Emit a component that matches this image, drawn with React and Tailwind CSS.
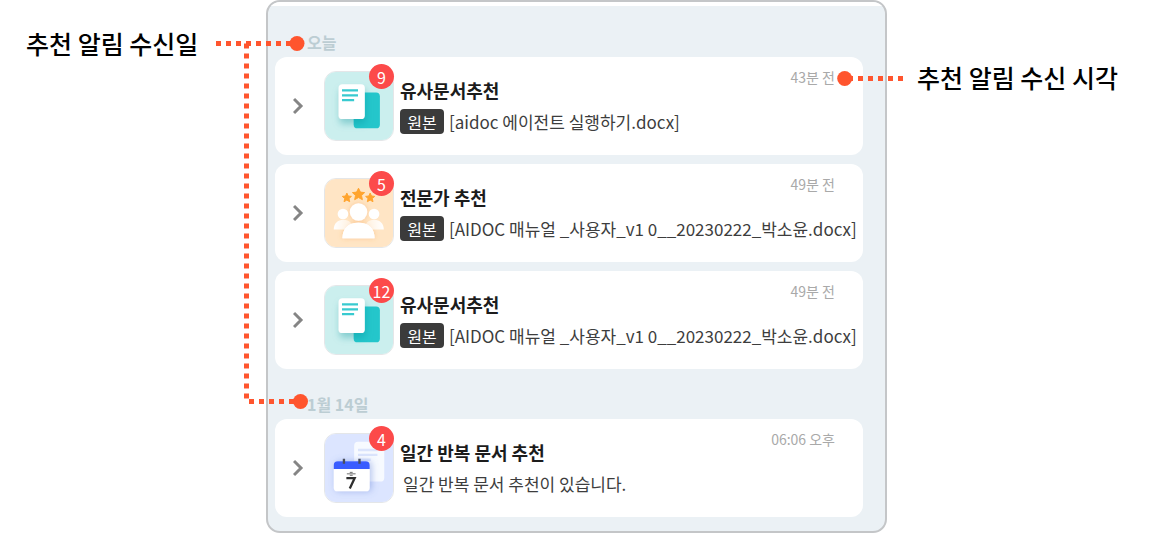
import React from 'react';

const GROUPS = [
    {
        id: 'today',
        label: '오늘',
        items: [
            { id: 1, icon: 'docs', count: 9, title: '유사문서추천', time: '43분 전', source: true, text: '[aidoc 에이전트 실행하기.docx]' },
            { id: 2, icon: 'experts', count: 5, title: '전문가 추천', time: '49분 전', source: true, text: '[AIDOC 매뉴얼 _사용자_v1 0__20230222_박소윤.docx]' },
            { id: 3, icon: 'docs', count: 12, title: '유사문서추천', time: '49분 전', source: true, text: '[AIDOC 매뉴얼 _사용자_v1 0__20230222_박소윤.docx]' },
        ],
    },
    {
        id: 'jan14',
        label: '1월 14일',
        items: [
            { id: 4, icon: 'daily', count: 4, title: '일간 반복 문서 추천', time: '06:06 오후', source: false, text: '일간 반복 문서 추천이 있습니다.' },
        ],
    },
];

const DocsIcon = () => (
    <svg viewBox="0 0 70 70" className="block size-full" aria-hidden="true">
        <defs>
            <filter id="docShadow" x="-50%" y="-50%" width="200%" height="200%">
                <feDropShadow dx="1" dy="5" stdDeviation="4" floodColor="#0c8f96" floodOpacity="0.35" />
            </filter>
        </defs>
        <rect width="70" height="70" fill="#cbefee" />
        <rect x="29.5" y="21" width="27" height="37" rx="4" fill="#24c6cb" />
        <rect x="14" y="12.5" width="27" height="36" rx="4" fill="#fff" filter="url(#docShadow)" />
        <path d="M17.500 19h16.500M17.500 24h16.500M17.500 29h12.500" stroke="#38cad0" strokeWidth="2.4" />
    </svg>
);

const ExpertsIcon = () => (
    <svg viewBox="0 0 70 70" className="block size-full" aria-hidden="true">
        <defs>
            <filter id="peopleShadow" x="-50%" y="-50%" width="200%" height="200%">
                <feDropShadow dx="0" dy="0" stdDeviation="3" floodColor="#f59a3c" floodOpacity="0.4" />
            </filter>
            <linearGradient id="sideFade" x1="0" x2="1">
                <stop offset="0" stopColor="#fff" />
                <stop offset="1" stopColor="#fff" stopOpacity="0.4" />
            </linearGradient>
            <linearGradient id="sideFadeRight" x1="1" x2="0">
                <stop offset="0" stopColor="#fff" />
                <stop offset="1" stopColor="#fff" stopOpacity="0.4" />
            </linearGradient>
        </defs>
        <rect width="70" height="70" fill="#ffe5c5" />
        <g fill="#fff" filter="url(#peopleShadow)">
            <circle cx="34.5" cy="34" r="9" />
            <path d="M18 61c0-10 6-16 16.500-16s16.500 6 16.500 16z" />
        </g>
        <circle cx="18.5" cy="36" r="5.5" fill="#fff" />
        <circle cx="50.5" cy="36" r="5.5" fill="#fff" />
        <path d="M9 52c0-6 4-10 10-10s10 4 10 10z" fill="url(#sideFade)" />
        <path d="M60.500 52c0-6-4-10-10-10s-10 4-10 10z" fill="url(#sideFadeRight)" />
        <path d="M18 61c0-10 6-16 16.500-16s16.500 6 16.500 16z" fill="#fff" />
        <g fill="#ffa42e" stroke="#ffa42e" strokeWidth="1" strokeLinejoin="round">
            <path d="M34.500 9.500l2 4 4.300.500-3.200 3 .900 4.300-4-2.200-4 2.200.900-4.300-3.200-3 4.300-.500z" />
            <path d="M22.500 14.500l1.400 3 3.300.400-2.500 2.200.700 3.300-2.900-1.700-2.900 1.700.700-3.300-2.500-2.200 3.300-.400z" />
            <path d="M46.500 14.500l1.400 3 3.300.400-2.500 2.200.700 3.300-2.900-1.700-2.900 1.700.700-3.300-2.500-2.200 3.300-.400z" />
        </g>
    </svg>
);

const DailyIcon = () => (
    <svg viewBox="0 0 70 70" className="block size-full" aria-hidden="true">
        <defs>
            <filter id="calShadow" x="-50%" y="-50%" width="200%" height="200%">
                <feDropShadow dx="2" dy="0" stdDeviation="4" floodColor="#5d7fd6" floodOpacity="0.45" />
            </filter>
        </defs>
        <rect width="70" height="70" fill="#dce5ff" />
        <rect x="30" y="8" width="31" height="41" rx="4" fill="#f7faff" />
        <path d="M34 16.500h20M34 21.500h20M34 26.500h13" stroke="#dbe4fc" strokeWidth="2.400" />
        <g filter="url(#calShadow)">
            <rect x="9" y="28" width="37" height="31" rx="4" fill="#fff" />
        </g>
        <path d="M9 36v-4a4 4 0 0 1 4-4h29a4 4 0 0 1 4 4v4z" fill="#3a5dff" />
        <path d="M19.500 25.500v5M35.500 25.500v5" stroke="#4a4e5c" strokeWidth="2.400" />
        <path d="M22.500 41h9M25.500 39.500h3M25.500 42.500h3" fill="none" stroke="#6b6b6b" strokeWidth="1" />
        <path d="M22 45.500h8.500l-5 10.500" fill="none" stroke="#2f2f2f" strokeWidth="2.400" />
    </svg>
);

const ICONS = {
    docs: DocsIcon,
    experts: ExpertsIcon,
    daily: DailyIcon,
};

const NotificationCard = ({ item }) => {
    const Icon = ICONS[item.icon];

    return (
        <li className="flex items-center rounded-xl bg-white">
            <button type="button" aria-label={`${item.title} 펼치기`} className="flex h-10 w-12 shrink-0 items-center justify-center text-[#858585]">
                <svg viewBox="0 0 12 18" className="h-[18px] w-3" fill="none" stroke="currentColor" strokeWidth="3" aria-hidden="true">
                    <path d="M1 2l7 7-7 7" />
                </svg>
            </button>

            <div className="relative ml-px mr-[6px] size-[70px] shrink-0">
                <div className="size-full overflow-hidden rounded-xl border border-[#e4e6e8]">
                    <Icon />
                </div>
                <span className="absolute -top-[7px] right-0 flex size-[25px] items-center justify-center rounded-full bg-[#fc4a4a] text-[16px] leading-none text-white">
                    {item.count}
                </span>
            </div>

            <div className="min-w-0 flex-1 pb-[21px] pt-[10px]">
                <div className="flex h-[35px] justify-between pr-7">
                    <h3 className="self-end text-[18px] font-bold leading-6 text-[#1c1c1c]">{item.title}</h3>
                    <time className="text-[14px] leading-5 text-[#a9a9a9]">{item.time}</time>
                </div>
                <div className="mt-[7px] flex h-[25px] items-center gap-[2px]">
                    {item.source && (
                        <span className="flex h-full w-11 shrink-0 items-center justify-center rounded-[4px] bg-[#3b3b3b] text-[16px] leading-none text-white">
                            원본
                        </span>
                    )}
                    <p className="truncate px-[3px] text-[17px] leading-6 text-[#3d3d3d]">{item.text}</p>
                </div>
            </div>
        </li>
    );
};

const App = () => {
    return (
        <main className="relative grid grid-cols-[266px_minmax(0,1fr)_275px] bg-white font-['Noto_Sans_CJK_KR','Noto_Sans',sans-serif]">
            <aside className="pl-[26px] pt-[25px]">
                <p className="whitespace-nowrap text-[25px] font-medium leading-9 text-black">추천 알림 수신일</p>
            </aside>

            <section className="overflow-hidden rounded-[14px] border-2 border-[#c4c6c8] bg-[#ebf1f5]">
                <div className="h-1 bg-white" />
                <div className="pb-[14px] pl-[7px] pr-[22px] pt-px">
                    {GROUPS.map((group) => (
                        <div key={group.id}>
                            <h2 className="flex h-[50px] items-end pb-[3px] pl-8 text-[16px] font-bold leading-6 text-[#bccdd3]">
                                {group.label}
                            </h2>
                            <ul className="space-y-[9px]">
                                {group.items.map((item) => (
                                    <NotificationCard key={item.id} item={item} />
                                ))}
                            </ul>
                        </div>
                    ))}
                </div>
            </section>

            <aside className="relative pl-[30px] pt-[59px]">
                <p className="whitespace-nowrap text-[25px] font-medium leading-9 text-black">추천 알림 수신 시각</p>
                {/* callout line to the received time */}
                <svg className="absolute -left-[50px] top-[70px] h-4 w-[68px]" viewBox="0 0 68 16" aria-hidden="true">
                    <path d="M11 8.500h56" stroke="#ff552e" strokeWidth="5" strokeDasharray="5 5" />
                    <circle cx="7.700" cy="8.500" r="7.500" fill="#ff552e" />
                </svg>
            </aside>

            {/* callout lines to the two date headings */}
            <svg className="absolute left-[216px] top-[36px] h-[374px] w-[93px]" viewBox="0 0 93 374" aria-hidden="true">
                <g fill="none" stroke="#ff552e" strokeWidth="5" strokeDasharray="5 5">
                    <path d="M0 7.500h78" />
                    <path d="M30.500 7.500v356" />
                    <path d="M33 365.500h48" />
                </g>
                <circle cx="81" cy="7.500" r="7.500" fill="#ff552e" />
                <circle cx="84.500" cy="365.500" r="7.500" fill="#ff552e" />
            </svg>
        </main>
    );
};

export default App;
